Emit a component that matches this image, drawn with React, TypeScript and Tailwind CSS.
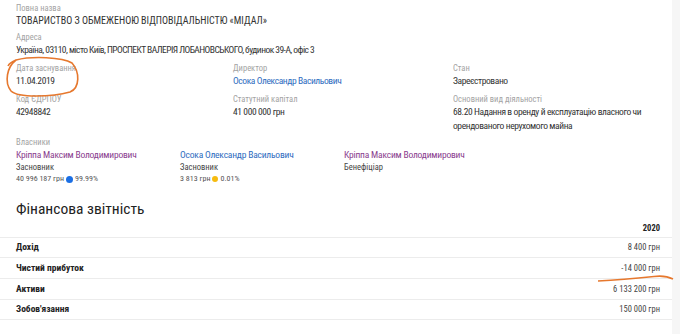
import React from "react";

const font = { fontFamily: 'Roboto, "Noto Sans", sans-serif' };

function Field({ label, children, className = "", valueClass = "tracking-[-0.4px]" }: { label: string; children: React.ReactNode; className?: string; valueClass?: string }) {
  return (
    <div className={className}>
      <div className="text-[8.5px] leading-[12px] text-[#a3a3a3]">{label}</div>
      <div className={`text-[9.5px] leading-[14px] text-[#333] ${valueClass}`}>{children}</div>
    </div>
  );
}

export default function App() {
  const rows: [string, string, string][] = [
    ["Дохід", "8 400 грн", "h-[20px]"],
    ["Чистий прибуток", "-14 000 грн", "h-[21px]"],
    ["Активи", "6 133 200 грн", "h-[21px]"],
    ["Зобов'язання", "150 000 грн", "h-[20px]"],
  ];
  return (
    <div className="relative w-[680px] h-[334px] overflow-hidden bg-[#f6f6f6] flex [font-stretch:condensed]" style={font}>
      <div className="w-[672px] bg-white pl-[16px] pr-[12px] pt-[2px]">
        <div>
          <div className="text-[8.5px] leading-[12px] text-[#a3a3a3]">Повна назва</div>
          <div className="text-[10px] leading-[14px] text-[#333]">ТОВАРИСТВО З ОБМЕЖЕНОЮ ВІДПОВІДАЛЬНІСТЮ «МІДАЛ»</div>
        </div>
        <Field label="Адреса" className="mt-[3px]" valueClass="tracking-[-0.55px]">
          Україна, 03110, місто Київ, ПРОСПЕКТ ВАЛЕРІЯ ЛОБАНОВСЬКОГО, будинок 39-А, офіс 3
        </Field>
        <div className="grid grid-cols-[217px_220px_1fr] mt-[5px] gap-y-[5px]">
          <Field label="Дата заснування">11.04.2019</Field>
          <Field label="Директор"><span className="text-[#2e6cc0]">Осока Олександр Васильович</span></Field>
          <Field label="Стан">Зареєстровано</Field>
          <Field label="Код ЄДРПОУ">42948842</Field>
          <Field label="Статутний капітал">41 000 000 грн</Field>
          <Field label="Основний вид діяльності">
            68.20 Надання в оренду й експлуатацію власного чи орендованого нерухомого майна
          </Field>
        </div>
        <div className="mt-[3px] text-[8.5px] leading-[12px] text-[#a3a3a3]">Власники</div>
        <div className="grid grid-cols-[164px_164px_1fr]">
          <div>
            <div className="text-[9.5px] leading-[13px] tracking-[-0.2px] text-[#8a3d8e]">Кріппа Максим Володимирович</div>
            <div className="text-[8.5px] leading-[12px] text-[#444]">Засновник</div>
            <div className="text-[8px] leading-[12px] text-[#555] flex items-center gap-[2px]">
              <span>40 996 187 грн</span>
              <span className="inline-block w-[7px] h-[7px] rounded-full bg-[#1b6fe4]" />
              <span>99.99%</span>
            </div>
          </div>
          <div>
            <div className="text-[9.5px] leading-[13px] tracking-[-0.2px] text-[#2e6cc0]">Осока Олександр Васильович</div>
            <div className="text-[8.5px] leading-[12px] text-[#444]">Засновник</div>
            <div className="text-[8px] leading-[12px] text-[#555] flex items-center gap-[2px]">
              <span>3 813 грн</span>
              <span className="inline-block w-[6px] h-[6px] rounded-full bg-[#f6bb10]" />
              <span>0.01%</span>
            </div>
          </div>
          <div>
            <div className="text-[9.5px] leading-[13px] tracking-[-0.2px] text-[#8a3d8e]">Кріппа Максим Володимирович</div>
            <div className="text-[8.5px] leading-[12px] text-[#444]">Бенефіціар</div>
          </div>
        </div>
        <div className="mt-[13px] text-[15.5px] leading-[22px] text-[#222]">Фінансова звітність</div>
        <div className="-ml-[16px] -mr-[12px]">
          <div className="flex justify-end items-center h-[18px] pr-[12px] border-b border-[#ececec] text-[8.5px] font-bold text-[#222]">2020</div>
          {rows.map(([l, v, h]) => (
            <div key={l} className={`flex justify-between items-center ${h} pl-[16px] pr-[12px] border-b border-[#ececec]`}>
              <span className="text-[9.5px] font-bold text-[#222]">{l}</span>
              <span className="text-[8.5px] text-[#444]">{v}</span>
            </div>
          ))}
        </div>
      </div>
      <svg className="absolute left-0 top-0 pointer-events-none" width="680" height="334">
        <path d="M16 60 C 7 67, 4 82, 11 91 C 18 98, 52 97, 70 92 C 80 88, 80 72, 72 63 C 62 57, 32 56, 16 60 C 11 62, 9 64, 8 66" fill="none" stroke="#e6782e" strokeWidth="1.6" />
        <path d="M598 281 C 620 280, 640 278, 654 276.5 C 662 275.5, 668 276.5, 673 279" fill="none" stroke="#e6782e" strokeWidth="1.6" />
      </svg>
    </div>
  );
}
